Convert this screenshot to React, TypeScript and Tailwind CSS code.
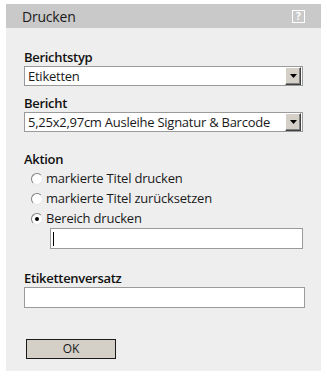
import React from "react";

const font = { fontFamily: '"Open Sans", "Noto Sans", sans-serif' };

function Arrow() {
  return (
    <div className="w-[16px] h-[18px] bg-[#d4d0c8] border-t border-l border-t-[#ffffff] border-l-[#ffffff] border-r border-b border-r-[#404040] border-b-[#404040] flex items-center justify-center shadow-[inset_-1px_-1px_0_#808080]">
      <svg width="7" height="4" viewBox="0 0 7 4">
        <path d="M0 0h7L3.5 4z" fill="#000" />
      </svg>
    </div>
  );
}

function Select({ value }: { value: string }) {
  return (
    <div className="h-[20px] w-[279px] bg-white border border-[#9a9a9a] flex items-center justify-between pl-[3px] pr-[1px]">
      <span className="text-[13px] leading-none tracking-[-0.25px] text-[#1a1a1a]">{value}</span>
      <Arrow />
    </div>
  );
}

function Radio({ checked }: { checked?: boolean }) {
  return (
    <span className="relative inline-block w-[12px] h-[12px] rounded-full bg-white border border-t-[#808080] border-l-[#808080] border-r-[#e8e8e8] border-b-[#e8e8e8]">
      {checked && (
        <span className="absolute left-[3px] top-[3px] w-[4px] h-[4px] rounded-full bg-black" />
      )}
    </span>
  );
}

const label = "text-[13px] font-semibold leading-[15px] tracking-[-0.3px] text-[#111]";
const opt = "text-[13px] leading-none tracking-[-0.2px] text-[#1a1a1a]";

export default function App() {
  return (
    <div className="bg-white w-[327px] h-[377px] pt-[4px] pl-[6px]" style={font}>
      <div className="w-[315px] h-[367px] bg-[#eeeeee] flex flex-col">
        <div className="h-[24px] bg-[#c9c9c9] flex items-center justify-between pl-[16px] pr-[16px]">
          <span className="text-[14px] tracking-[-0.2px] text-[#1a1a1a]">Drucken</span>
          <span className="w-[13px] h-[13px] border border-white flex items-center justify-center text-white text-[10px] font-bold leading-none">?</span>
        </div>
        <div className="pl-[18px] flex flex-col">
          <div className={`mt-[22px] ${label}`}>Berichtstyp</div>
          <div className="mt-[1px]"><Select value="Etiketten" /></div>
          <div className={`mt-[10px] ${label}`}>Bericht</div>
          <div className="mt-[1px]"><Select value="5,25x2,97cm Ausleihe Signatur & Barcode" /></div>
          <div className={`mt-[20px] ${label}`}>Aktion</div>
          <div className="flex flex-col pl-[7px] mt-[3px] gap-[3px]">
            <div className="flex items-center gap-[3px] h-[17px]">
              <Radio />
              <span className={opt}>markierte Titel drucken</span>
            </div>
            <div className="flex items-center gap-[3px] h-[17px]">
              <Radio />
              <span className={opt}>markierte Titel zurücksetzen</span>
            </div>
            <div className="flex items-center gap-[3px] h-[17px]">
              <Radio checked />
              <span className={opt}>Bereich drucken</span>
            </div>
          </div>
          <div className="ml-[26px] mt-[1px] w-[253px] h-[21px] bg-white border border-[#9a9a9a] flex items-center pl-[2px]">
            <span className="w-[1px] h-[14px] bg-black" />
          </div>
          <div className={`mt-[22px] ${label}`}>Etikettenversatz</div>
          <div className="mt-[1px] w-[281px] h-[21px] bg-white border border-[#9a9a9a]" />
          <div className="ml-[2px] mt-[31px] w-[90px] h-[20px] bg-[#d4d0c8] border border-[#1a1a1a] flex items-center justify-center text-[12px] text-[#1a1a1a] leading-none">OK</div>
        </div>
      </div>
    </div>
  );
}
